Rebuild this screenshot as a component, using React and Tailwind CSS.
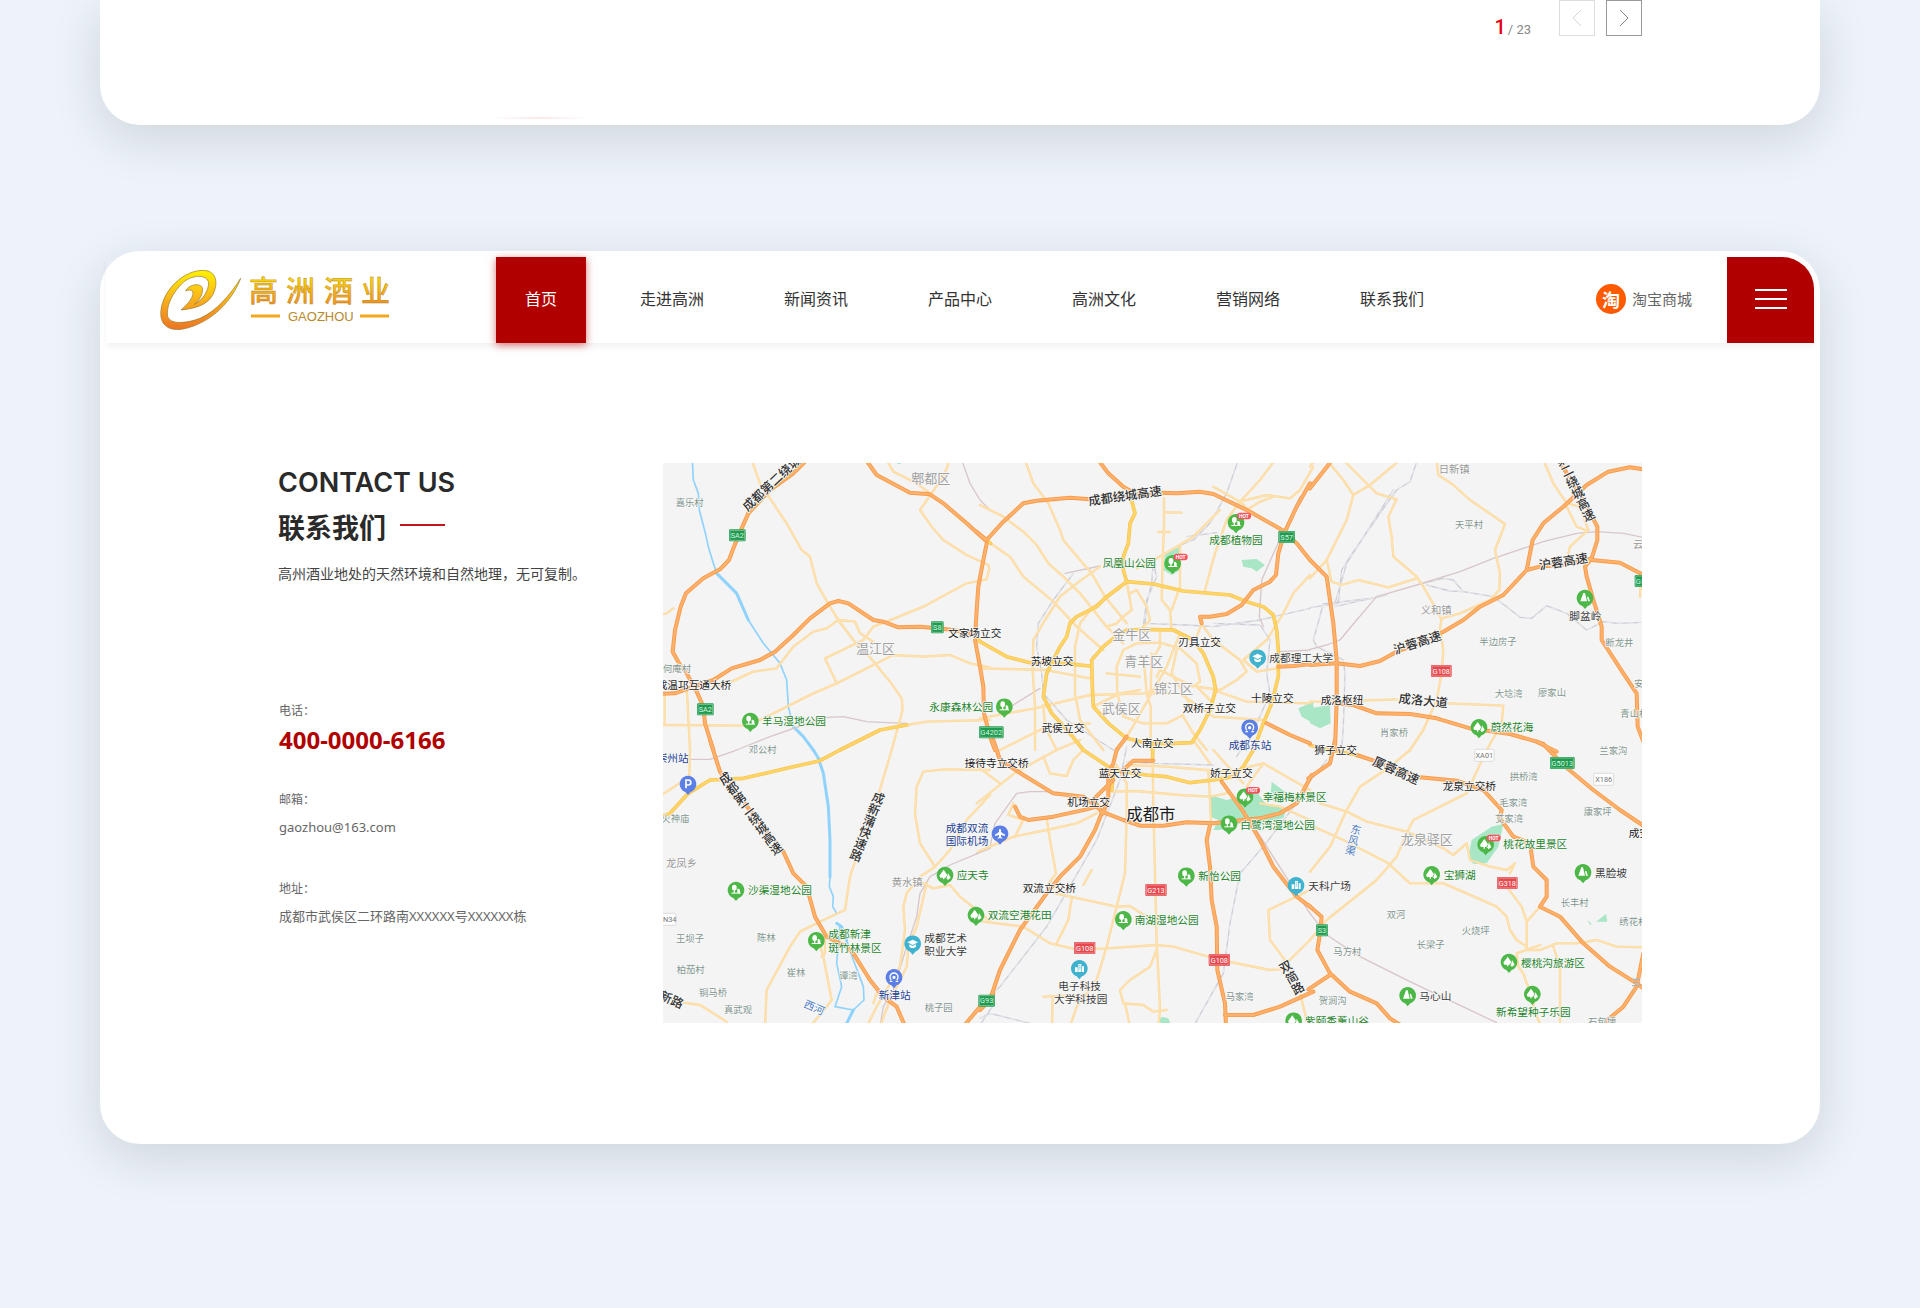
import React from "react";

const SANS = "font-['Noto_Sans','Noto_Sans_CJK_SC',sans-serif]";
const CJK = "font-['Noto_Sans_CJK_SC',sans-serif]";

/* ---------- Map data: six sheets, each with its own origin ---------- */

const SHEETS = [
  {
    at: [0, 0],
    highway: [
      "265 160 245 205 222 260 207 300 180 328 130 355 78 400 62 440 45 510 38 575 60 615 80 640 110 695 130 740 135 790 160 870",
      "265 160 330 90 400 40 440 0",
      "0 702 45 700 100 680 160 660 215 625 300 600 345 575 400 525 450 475 510 430 535 423 565 430 640 480 670 485 715 502 780 500 860 508 940 520",
      "618 0 650 45 750 98 810 103 850 130 920 190 975 240",
      "980 250 968 310 955 380 950 450 945 540 960 620 970 680 972 760 990 830 1005 870",
    ],
    gold: ["540 870 660 810 740 795", "940 520 960 545"],
    minor: [
      "275 0 300 70 350 145 380 190 425 270 450 290 470 370 510 440 535 480",
      "535 480 500 505 460 515 400 560 350 625 280 635 215 665 160 680",
      "535 480 580 540 620 580 690 665 725 715 728 750 695 870",
      "545 495 535 480 585 485 600 520 640 545",
      "530 670 495 595 610 540 640 500 680 485 790 440 920 370 980 358 988 325 985 315 920 285 850 240 815 200 780 150 850 50 870 0",
      "0 795 250 797 310 775 460 700 530 670 640 615 700 585 790 590 870 585 930 610 990 622",
      "14 710 14 795",
      "80 680 90 870",
      "0 464 20 460 40 445",
      "680 0 700 35 770 70 810 100",
      "740 795 800 785 990 780",
    ],
    river: ["97 0 100 60 115 100 118 150 135 215 145 260 160 310 170 340", "170 340 230 400 265 480 310 550 360 610 380 660 385 740 400 800"],
    wide: ["400 800 430 830 460 870", "170 340 230 400 265 480"],
    railway: [],
    metro: ["230 870 330 830 430 795 500 772 550 770 620 785 680 788 740 790", "905 0 930 70 960 120 990 150"],
    park: ["712 0 722 0 722 12 712 12"],
  },
  {
    at: [960, 0],
    highway: [
      "355 0 385 40 430 80 455 95",
      "-10 215 20 240 70 185 130 130 170 122 270 113 330 118 430 105 540 98 590 100 660 95 700 102 810 155 910 212 950 250 990 300",
      "990 70 950 140 915 215 895 280 888 345 870 365 820 390 785 435 740 462 690 470 660 470 665 490",
      "895 620 940 618 990 612",
      "860 790 930 825 990 850",
      "440 830 410 870",
    ],
    gold: [
      "10 232 32 250",
      "452 110 465 160 450 190 445 250 430 290 430 330 440 365",
      "440 365 520 372 610 393 750 405 800 425 850 440 880 465 890 510 895 570 895 650 875 730 850 790 820 870",
      "440 365 380 410 350 440 290 470 270 490 260 530 240 560 200 640 190 710 215 760 270 820 310 870",
      "0 545 80 590 150 608 250 610 330 618",
      "440 510 500 508 580 510 640 540 670 580 700 650 707 690 690 750 660 810 635 848 580 850 500 850 440 835 385 790 340 740 337 680 335 600 370 560 400 535 440 510",
    ],
    minor: [
      "135 0 160 70 205 130 240 210 250 240 300 300 335 340 375 410 440 490",
      "0 135 70 170 130 215 170 255 205 310 250 350 300 400 380 500 430 550",
      "25 245 90 290 130 350 220 425 290 500 370 570",
      "360 320 290 370 240 410 195 480 160 540 158 630 165 740 165 870",
      "552 115 552 200 548 300 545 420 570 450 575 510",
      "553 157 605 158",
      "535 216 570 216",
      "600 260 600 380 575 450",
      "440 365 450 420 455 450 430 470 410 490 380 500",
      "450 400 470 390 500 440 510 480 490 500",
      "420 385 340 440 300 490 285 560 285 640 285 700 300 780 370 870",
      "700 80 780 125 810 155",
      "900 -20 840 60 780 125 740 180 705 280 675 390",
      "780 125 860 105 930 115 960 90 1000 20",
      "800 150 840 125 880 110",
      "470 325 540 290 640 230 720 150",
      "990 345 940 400 910 460 860 540 790 600 830 635 890 625",
      "670 500 700 540 780 600 800 635 770 660 720 690 650 680",
      "665 490 650 530",
      "410 620 430 570 470 550 540 548 600 565 650 610 660 665 640 680 600 660 540 630 530 650",
      "410 620 412 700 430 770 490 790 560 790 610 765",
      "490 590 495 640 500 700 512 740 512 870",
      "515 580 512 700",
      "540 510 540 560 515 600",
      "0 625 200 630 250 640 330 655",
      "0 775 165 745 330 705 500 700 560 670",
      "60 870 200 800 330 790",
      "600 520 560 620 520 690 470 780 440 830",
      "500 700 600 700 700 770 850 780",
      "700 690 800 725 990 730",
      "340 740 420 700 480 690",
      "610 770 640 820 680 870",
      "650 680 700 730",
      "190 735 195 800 230 870",
      "590 570 575 640 640 750",
      "380 640 480 650",
    ],
    river: [],
    wide: [],
    railway: [
      "775 0 740 100 690 190 640 240 590 260 520 300 515 370 500 430 495 490 620 495 700 500 840 480 990 445",
      "520 310 530 350 500 420 490 500",
      "280 340 220 420 175 490 170 560 185 640 190 700 260 780 400 870",
      "700 490 840 495 870 540 860 640 870 700 800 860",
      "620 230 710 218",
    ],
    metro: ["255 340 360 318", "60 760 100 735 180 685", "960 110 885 270 845 360 838 470 850 500", "900 575 990 570"],
    park: [
      "785 300 830 297 855 315 830 335 815 325 790 320",
      "555 280 600 260 600 330 575 345 550 330",
      "1000 725 955 745 965 770 1000 790",
    ],
  },
  {
    at: [1950, 0],
    highway: [
      "0 85 55 15 65 0",
      "0 300 50 350 60 420 70 490 80 600 80 720 75 870",
      "0 615 80 610 150 618 210 603 260 575 330 550 400 515 460 480 510 440 580 405 650 330 690 320 770 312 845 295",
      "650 330 668 240 700 190 760 140 830 75 895 35 960 22 1000 28",
      "745 0 790 70 830 140 862 200 862 240 845 295 825 320 830 350 850 420 875 500 875 540 940 640 980 700 983 800 1000 845",
      "845 300 930 308 1000 345",
      "80 730 130 735 200 760 300 762 380 775 480 805 600 822 680 845 740 875",
    ],
    gold: [],
    minor: [
      "50 0 100 60 130 105 110 180 50 300 0 355",
      "0 20 15 0",
      "130 105 180 75 270 0",
      "100 0 160 60 200 100 260 118 235 170 245 230 250 290 320 350 340 380 380 450 395 480",
      "50 300 65 365 95 375 145 360 235 382 320 355",
      "380 0 385 45 430 75 480 120 585 192 555 270 570 340 568 390 540 420 450 460 395 475 390 505 400 570 395 640 380 720 340 810 300 870",
      "700 0 730 70 770 130 810 140 835 210 780 260 775 280",
      "770 140 800 200 830 212",
      "0 725 60 725 260 718",
      "415 730 580 737 575 790 530 870",
      "992 380 990 410",
    ],
    river: [],
    wide: [],
    railway: [
      "322 0 300 65 260 90 210 160 120 290 95 330 85 430 20 440 0 443",
      "250 90 110 310 75 430",
      "75 440 140 425 230 405 180 415 40 432 10 540 20 560 100 600 105 640 100 800 95 870",
      "340 370 400 355 430 360 460 395",
      "350 375 420 393 460 395 550 410 590 440 630 472 665 475 710 437 770 460 830 510 880 485 920 490 1000 487",
    ],
    metro: ["0 568 50 555 90 540 140 480 200 410 320 375 450 335 550 295 700 245 800 220 860 215 940 220 1000 232"],
    park: ["0 745 60 735 62 790 30 805 0 790"],
  },
  {
    at: [0, 840],
    highway: [
      "150 0 180 95 230 160 300 250 370 335 400 400 440 440 465 530 500 590 560 620 580 640 630 720 670 770 710 800 740 870",
      "1000 760 960 800 910 860",
    ],
    gold: ["0 232 30 220 85 160 150 120 250 115 380 85 480 62 540 30"],
    minor: [
      "0 168 88 110 90 30",
      "695 30 655 165 600 320 570 410 555 510 490 540 420 575 390 620 320 750 315 860",
      "990 90 850 88 790 95 770 140 765 220 780 310 825 380",
      "990 165 920 240 870 330 825 380 780 410 740 460 730 500 735 570 720 680 650 800 620 860",
      "800 430 770 560 745 620 740 680 690 780 660 860",
      "470 580 490 650 515 780 500 800 450 860",
      "70 788 120 795 200 845",
      "790 430 820 445 870 435 900 470 950 510 990 545",
      "495 590 495 640 485 650",
      "640 790 650 760 720 760",
    ],
    river: [
      "510 410 508 440 520 470 518 500 530 520",
      "555 620 560 600 580 660 610 740 612 780 580 810",
      "580 810 525 800 545 740 530 670 540 560",
    ],
    wide: ["460 30 475 55", "475 55 490 100 505 200 510 300 510 410", "530 550 545 560 560 600", "580 810 555 860"],
    railway: ["1000 795 970 840 950 870"],
    metro: ["95 58 150 58 220 34 230 30", "990 325 870 375 810 410 780 460 770 530 740 620 700 750 670 800 660 860"],
    park: [],
  },
  {
    at: [960, 840],
    highway: [
      "40 0 60 60 130 105 220 160 310 170 350 200 365 215",
      "410 30 400 70 385 100 385 170 370 220",
      "400 120 340 178 365 215",
      "365 220 345 270 300 350 240 410 200 460 120 570 60 690 30 780 0 810",
      "365 215 430 240 480 257 550 257 620 247 700 250 840 235 900 220 950 190 995 105",
      "105 200 120 230 145 240 220 230 320 208 350 200",
      "690 255 680 300 690 380 695 480 710 560 712 690 735 790 738 860",
      "735 825 820 825 900 800 1000 755",
      "725 125 790 215 840 300 880 380 950 470 990 500",
      "425 95 460 62 520 62",
    ],
    gold: [
      "310 30 385 80 430 95 500 105 560 110 630 128 700 120 760 110 790 80 820 30",
      "518 10 518 60",
      "400 100 395 150",
    ],
    minor: [
      "-10 190 110 95 230 30 300 0",
      "0 85 60 130",
      "190 50 210 100 260 108 280 60 310 30",
      "395 155 470 153 600 165 690 170 740 160",
      "410 75 440 130 440 230 435 400 410 500 380 620 350 720 290 800 270 860",
      "518 60 520 200 525 400 530 610 535 700 540 810 535 860",
      "685 90 690 180 693 250",
      "-5 335 100 290 200 270 290 250 350 220",
      "200 235 210 300 228 400 200 440",
      "130 240 105 290",
      "130 240 85 225 100 190",
      "225 460 410 500 450 498 500 530",
      "275 475 265 540 230 610",
      "10 545 130 560 210 610 290 628 380 625 530 615 580 620 720 660 870 690 900 688 990 600",
      "530 630 510 680 450 720 420 750 430 790 490 795 520 815 560 810",
      "435 790 450 860",
      "190 770 320 765",
      "218 770 216 860",
      "310 435 335 390",
      "440 75 560 80 680 90 750 95 850 70 920 110 990 150",
      "850 70 800 140",
      "840 190 900 200 990 240",
      "990 450 865 510 870 600 930 680 960 760 985 860",
      "640 0 690 70",
      "700 30 790 130",
    ],
    river: [],
    wide: [],
    railway: [
      "440 20 420 120 350 300 200 560 60 740 0 790",
      "980 150 850 320 780 400 750 550 730 700 640 860",
      "0 835 30 820 150 850",
      "800 0 770 50",
      "440 65 520 70 700 75",
    ],
    metro: ["-10 340 30 320 45 250 110 160 150 155 200 155 230 165", "790 210 950 460 990 520"],
    park: [
      "690 165 740 180 830 155 860 195 920 205 910 235 850 245 830 275 810 240 720 270 700 270 715 240 690 230",
      "875 125 915 155 905 190 870 180",
      "545 830 565 835 575 860 525 860",
    ],
  },
  {
    at: [1950, 840],
    highway: [
      "-5 115 60 70 75 0",
      "140 45 200 65 330 112 440 122 520 150 575 210 570 235 610 290 660 310 670 380 710 420 710 470 690 500 750 530 820 610 900 680 980 730 1000 745",
      "680 5 700 12 760 75 850 150 930 210 1000 257",
      "-5 495 35 530 30 580 22 630 60 700 120 755 200 790 240 835 280 860",
      "-5 748 60 705",
      "1000 640 980 740 940 800 880 850",
    ],
    gold: ["0 15 30 25 140 45"],
    minor: [
      "300 30 240 80 150 140 110 210 60 320 0 395",
      "530 30 470 160 310 240 290 280 260 350 200 420 50 540 0 600",
      "30 190 110 215 170 245 290 275 400 325 430 345 470 310 480 360 540 380 590 390 615 370 600 400",
      "0 255 100 300 235 370 300 430 400 430 470 460 560 500 590 530 600 570 620 600 650 620",
      "590 440 635 500 650 545 650 630 690 630 740 610 800 610 860 600 920 620 1000 622",
      "650 545 690 500",
      "690 615 620 640 625 680 640 700 650 730 665 760 675 820 695 860",
      "730 620 750 680 750 860",
    ],
    river: [],
    wide: [],
    railway: ["0 125 50 60"],
    metro: ["0 520 50 585 150 650 300 725 560 848"],
    park: [
      "580 252 545 260 485 300 475 350 490 372 530 370 565 320",
      "832 540 846 552 840 554",
      "858 545 872 535 888 522 892 545",
    ],
  },
];

/* [x, y (middle), text] with x at the left edge of the text */
const LABELS = {
  village: [
    [47, 131, "嘉乐村"], [9, 627, "何庵村"], [2385, 195, "天平村"], [2458, 548, "半边房子"], [2836, 550, "断龙井"],
    [2504, 702, "大埝湾"], [2634, 700, "廖家山"], [2160, 821, "肖家桥"], [2881, 762, "青山村"], [2923, 674, "安"],
    [266, 872, "邓公村"], [4, 1078, "火神庙"], [48, 1438, "王坝子"], [291, 1434, "陈林"],
    [50, 1532, "柏茄村"], [380, 1540, "崔林"], [117, 1599, "铜马桥"], [192, 1650, "真武观"], [537, 1548, "谭湾"],
    [794, 1644, "桃子园"], [1697, 1612, "马家湾"], [2818, 875, "兰家沟"], [2549, 952, "拱桥湾"], [2518, 1030, "毛家湾"],
    [2505, 1078, "艾家湾"], [2771, 1056, "康家坪"], [2180, 1366, "双河"], [2405, 1414, "火烧坪"], [2270, 1457, "长梁子"],
    [2020, 1476, "马方村"], [2702, 1329, "长丰村"], [2878, 1388, "绣花村"], [1976, 1625, "贺涧沟"], [2784, 1688, "石包埂"],
  ],
  town: [
    [2336, 29, "日新镇"], [2282, 454, "义和镇"], [2919, 255, "云"], [18, 1211, "龙凤乡"], [695, 1269, "黄水镇"],
  ],
  district: [
    [754, 58, "郫都区"], [588, 567, "温江区"], [1357, 525, "金牛区"], [1393, 606, "青羊区"], [1482, 688, "锦江区"],
    [1325, 748, "武侯区"], [2222, 1141, "龙泉驿区"],
  ],
  junction: [
    [-10, 678, "成温邛互通大桥"], [864, 521, "文家场立交"], [1112, 604, "苏坡立交"], [1555, 549, "刃具立交"],
    [1773, 716, "十陵立交"], [1568, 745, "双桥子立交"], [1145, 807, "武侯立交"], [1413, 851, "人南立交"],
    [1982, 721, "成洛枢纽"], [914, 911, "接待寺立交桥"], [1316, 941, "蓝天立交"], [1650, 941, "娇子立交"],
    [1222, 1028, "机场立交"], [1088, 1285, "双流立交桥"], [1963, 871, "狮子立交"], [2348, 981, "龙泉立交桥"],
    [2906, 1121, "成安"],
  ],
  place: [
    [1828, 596, "成都理工大学"], [2728, 469, "脚盆岭"], [793, 1436, "成都艺术"], [793, 1476, "职业大学"],
    [1195, 1579, "电子科技"], [1182, 1620, "大学科技园"], [1945, 1280, "天科广场"], [2805, 1240, "黑脸坡"], [2278, 1610, "马心山"],
  ],
  green: [
    [306, 785, "羊马湿地公园"], [808, 742, "永康森林公园"], [1328, 312, "凤凰山公园"], [1648, 242, "成都植物园"],
    [2492, 804, "蔚然花海"], [264, 1293, "沙渠湿地公园"], [505, 1424, "成都新津"], [505, 1465, "斑竹林景区"],
    [890, 1248, "应天寺"], [983, 1368, "双流空港花田"], [1424, 1382, "南湖湿地公园"], [1615, 1250, "新怡公园"],
    [1808, 1012, "幸福梅林景区"], [1741, 1096, "白鹭湾湿地公园"], [2530, 1154, "桃花故里景区"], [2351, 1246, "宝狮湖"],
    [2583, 1510, "樱桃沟旅游区"], [2508, 1657, "新希望种子乐园"], [1935, 1686, "紫颐香薰山谷"],
  ],
  transit: [
    [1706, 857, "成都东站"], [-10, 895, "崇州站"], [857, 1106, "成都双流"], [857, 1145, "国际机场"], [656, 1607, "新津站"],
  ],
};

const LABEL_STYLE = {
  village: { size: 28, cls: "fill-[#82968f]" },
  town: { size: 31, cls: "fill-[#999999]" },
  district: { size: 39, cls: "fill-[#a0a0a0]" },
  junction: { size: 32, cls: "fill-[#1c1c1c]" },
  place: { size: 32, cls: "fill-[#3c3c3c]" },
  green: { size: 32, cls: "fill-[#23842a]" },
  transit: { size: 32, cls: "fill-[#243f94]" },
};

/* Road names: centre, angle, text and whether the characters are stacked */
const ROAD_NAMES = [
  [362, 45, -43, "成都第二绕城高速"],
  [1395, 108, -8, "成都绕城高速"],
  [2272, 548, -18, "沪蓉高速"],
  [2710, 305, -9, "沪蓉高速"],
  [2290, 722, 6, "成洛大道"],
  [2208, 932, 24, "厦蓉高速"],
  [18, 1612, 24, "成新路"],
  [272, 1060, -36, "成都第二绕城高速", true],
  [622, 1100, 21, "成新蒲快速路", true],
  [1895, 1552, -30, "双简路", true],
  [2745, 82, -26, "第二绕城高速", true],
];

const PINS = [
  ["park", 271, 783], ["park", 1033, 740], ["park", 1538, 310, true], ["park", 1728, 187, true], ["hill", 2775, 414],
  ["trees", 2457, 802], ["school", 1793, 593], ["rail", 1769, 803], ["car", 84, 972], ["park", 228, 1290],
  ["park", 469, 1441], ["trees", 855, 1245], ["trees", 948, 1365], ["school", 758, 1451], ["rail", 702, 1552],
  ["plane", 1020, 1121], ["park", 1579, 1247], ["park", 1390, 1378], ["office", 1258, 1525], ["office", 1908, 1276],
  ["trees", 1755, 1010, true], ["park", 1707, 1091], ["trees", 2477, 1153, true], ["trees", 2315, 1243],
  ["hill", 2769, 1237], ["hill", 2243, 1606], ["trees", 2547, 1506], ["trees", 2617, 1602], ["trees", 1901, 1682],
];

const PIN_FILL = {
  park: "#4db848", hill: "#4db848", trees: "#4db848", school: "#3fb2cf", office: "#3fb2cf",
  rail: "#5b7fe6", car: "#5b7fe6", plane: "#5b7fe6",
};

const BADGES = [
  ["green", 232, 226, 50, "SA2"], ["green", 136, 748, 50, "SA2"], ["green", 832, 502, 38, "S8"],
  ["green", 994, 817, 74, "G4202"], ["green", 1880, 231, 50, "S57"], ["green", 2941, 363, 34, "G5"],
  ["red", 2344, 633, 62, "G108"], ["red", 1488, 1290, 64, "G213"], ["red", 1274, 1464, 64, "G108"], ["red", 1678, 1500, 64, "G108"],
  ["red", 2542, 1269, 62, "G318"], ["green", 980, 1622, 50, "G93"], ["green", 2707, 909, 74, "G5013"], ["green", 1986, 1411, 36, "S3"],
  ["plain", 2473, 886, 58, "XA01"], ["plain", 2831, 958, 60, "X186"], ["plain", 22, 1378, 52, "XN34"],
];

function PinGlyph({ kind }) {
  switch (kind) {
    case "park":
      return (
        <g fill="#fff">
          <path d="M-5-16a7 8 0 0 1 7 8v3c0 4-2 6-5 6v8h-4V1c-3 0-5-2-5-6v-3a7 8 0 0 1 7-8z" />
          <path d="M4-4h4l4 4v9H4z" />
          <path d="M-14 8h28v3h-28z" />
        </g>
      );
    case "trees":
      return (
        <g fill="#fff">
          <path d="M-4-16l11 16-5 8h-4v5h-4V8h-8l-3-6z" />
          <path d="M9-6l8 14-3 3h-3v3H7v-3H4l4-10z" />
        </g>
      );
    case "hill":
      return (
        <g fill="#fff">
          <path d="M-5-15h5l6 25h-20z" />
          <path d="M6-4h4l5 14H9z" />
        </g>
      );
    case "school":
      return (
        <g fill="#fff">
          <path d="M0-12l16 8-16 8-16-8z" />
          <path d="M-10 2l10 5 10-5v7c-5 5-15 5-20 0z" />
        </g>
      );
    case "office":
      return (
        <g fill="#fff">
          <path d="M-3-13h9v24h-9z" />
          <path d="M-13-3h8v14h-8zM8-6h6v17H8z" />
          <path d="M-1-8h5M-1-3h5M-1 2h5" stroke="#3fb2cf" strokeWidth="2" />
        </g>
      );
    case "rail":
      return (
        <g fill="none" stroke="#fff" strokeWidth="4">
          <path d="M-8 8a12 12 0 1 1 16 0" />
          <path d="M-13 12h8M5 12h8" />
          <circle cx="0" cy="0" r="3" fill="#fff" />
        </g>
      );
    case "plane":
      return <path fill="#fff" d="M0-15c2 0 3 3 3 6v4l12 8v4L3 4v6l4 3v2l-7-2-7 2v-2l4-3V4l-12 3V3l12-8v-4c0-3 1-6 3-6z" />;
    default:
      return <path fill="none" stroke="#fff" strokeWidth="5" d="M-6 13v-25h7a7 7 0 0 1 0 15h-7" />;
  }
}

function Pin({ kind, x, y, hot }) {
  return (
    <g transform={`translate(${x} ${y})`}>
      <path d="M0 33l-8-9a25 25 0 1 1 16 0z" fill={PIN_FILL[kind]} />
      <PinGlyph kind={kind} />
      {hot && (
        <g>
          <rect x="3" y="-29" width="42" height="20" rx="9" fill="#f4545f" />
          <text x="24" y="-13" textAnchor="middle" fontSize="15" className="fill-white font-['Roboto',sans-serif] font-bold">
            HOT
          </text>
        </g>
      )}
    </g>
  );
}

const BADGE_STYLE = {
  green: { bg: "#1f9a4e", line: "#9fd9b4", text: "fill-[#d9f5e2]" },
  red: { bg: "#e5484d", line: "#f7b3b5", text: "fill-white" },
  plain: { bg: "#fdfdfd", line: "#cfcfcf", text: "fill-[#777777]" },
};

function Badge({ kind, x, y, w, text }) {
  const s = BADGE_STYLE[kind];
  return (
    <g>
      <rect x={x - w / 2} y={y - 18} width={w} height="36" rx="4" fill={s.bg} />
      <rect x={x - w / 2 + 3} y={y - 15} width={w - 6} height="30" rx="2" fill="none" stroke={s.line} strokeWidth={kind === "plain" ? 0 : 2} />
      {kind === "plain" && (
        <rect x={x - w / 2} y={y - 18} width={w} height="36" rx="4" fill="none" stroke={s.line} strokeWidth="2" />
      )}
      <text x={x} y={y + 8} textAnchor="middle" fontSize="22" className={`${s.text} font-['Roboto',sans-serif]`}>
        {text}
      </text>
    </g>
  );
}

function Layer({ kind, ...stroke }) {
  return (
    <g fill="none" strokeLinejoin="round" strokeLinecap="round" {...stroke}>
      {SHEETS.map((sheet) =>
        sheet[kind].map((points) => (
          <polyline key={sheet.at + points} points={points} transform={`translate(${sheet.at[0]} ${sheet.at[1]})`} />
        ))
      )}
    </g>
  );
}

function CityMap() {
  return (
    <svg viewBox="9 9 2937 1680" role="img" aria-label="成都市地图" className={`block h-auto w-full bg-[#f4f4f4] ${CJK}`}>
      <g fill="#a9e6c5">
        {SHEETS.map((sheet) =>
          sheet.park.map((points) => (
            <polygon key={points} points={points} transform={`translate(${sheet.at[0]} ${sheet.at[1]})`} />
          ))
        )}
      </g>
      <Layer kind="river" stroke="#8fd3fd" strokeWidth="5" />
      <Layer kind="wide" stroke="#8fd3fd" strokeWidth="9" />
      <Layer kind="railway" stroke="#cccdd6" strokeWidth="4" />
      <Layer kind="railway" stroke="#f4f4f8" strokeWidth="2" strokeDasharray="14 18" />
      <Layer kind="metro" stroke="#d9c6c9" strokeWidth="4" />
      <Layer kind="minor" stroke="#fbd79a" strokeWidth="7" />
      <Layer kind="minor" stroke="#ffe2ae" strokeWidth="4" />
      <Layer kind="gold" stroke="#f8c254" strokeWidth="11" />
      <Layer kind="gold" stroke="#ffd564" strokeWidth="7" />
      <Layer kind="highway" stroke="#f79a48" strokeWidth="12" />
      <Layer kind="highway" stroke="#ffb06a" strokeWidth="7" />

      {/* Toll plaza */}
      <path d="M2918 1558h22M2920 1567h18M2916 1577h26" stroke="#a9b6c4" strokeWidth="4" />

      {Object.entries(LABELS).map(([kind, items]) => {
        const s = LABEL_STYLE[kind];
        return (
          <g key={kind} fontSize={s.size} className={s.cls} stroke="#f9f9f9" strokeWidth="4" strokeLinejoin="round" paintOrder="stroke">
            {items.map(([x, y, text]) => (
              <text key={`${x}-${y}`} x={x} y={y + Math.round(s.size * 0.37) - 2}>
                {text}
              </text>
            ))}
          </g>
        );
      })}

      <g fontSize="37" className="fill-[#333333] font-medium" stroke="#f9f9f9" strokeWidth="5" paintOrder="stroke" textAnchor="middle">
        {ROAD_NAMES.map(([x, y, angle, text, stacked]) => (
          <text
            key={`${x}-${y}`}
            x={x}
            y={stacked ? y : y + 13}
            transform={`rotate(${angle} ${x} ${y})`}
            className={stacked ? "[writing-mode:vertical-rl]" : ""}
          >
            {text}
          </text>
        ))}
      </g>

      <g fontSize="32" className="fill-[#4f7fc4]" stroke="#f9f9f9" strokeWidth="5" paintOrder="stroke" textAnchor="middle">
        <text x="463" y="1654" transform="rotate(24 463 1642)">
          西河
        </text>
        <text x="2080" y="1140" transform="rotate(14 2080 1140)" className="[writing-mode:vertical-rl]">
          东风渠
        </text>
      </g>

      <text x="1399" y="1081" fontSize="49" className="fill-[#1c1c1c]" stroke="#f9f9f9" strokeWidth="5" paintOrder="stroke">
        成都市
      </text>

      {BADGES.map(([kind, x, y, w, text]) => (
        <Badge key={`${x}-${y}`} kind={kind} x={x} y={y} w={w} text={text} />
      ))}
      {PINS.map(([kind, x, y, hot]) => (
        <Pin key={`${x}-${y}`} kind={kind} x={x} y={y} hot={hot} />
      ))}
    </svg>
  );
}

/* ---------- Page chrome ---------- */

function Logo() {
  return (
    <svg viewBox="0 0 234 60" width="234" height="60" role="img" aria-label="高洲酒业" className="block shrink-0">
      <defs>
        <linearGradient id="swirl" x1="0" y1="0" x2="0" y2="1">
          <stop offset="0" stopColor="#fff200" />
          <stop offset="0.5" stopColor="#f9b01c" />
          <stop offset="1" stopColor="#ec7424" />
        </linearGradient>
        <linearGradient id="letters" x1="0" y1="0" x2="0" y2="1">
          <stop offset="0.2" stopColor="#f8d800" />
          <stop offset="0.6" stopColor="#f4ab1a" />
          <stop offset="1" stopColor="#ee8420" />
        </linearGradient>
      </defs>
      <g transform="scale(0.3333) translate(-30 -45)" fill="url(#swirl)" stroke="#96762c" strokeWidth="2">
        <path d="M272 70C250 130 190 205 95 223C50 228 28 205 33 165C40 105 100 46 160 46C200 47 207 85 187 122C168 152 135 160 93 165C105 153 118 143 125 128C135 108 125 100 107 108C112 92 148 80 157 98C160 115 150 135 133 148C155 138 175 110 176 85C172 55 125 60 100 82C65 115 48 155 53 185C62 210 110 205 150 190C200 168 240 120 272 70Z" />
      </g>
      <text x="89 126 164 201" y="32" fontSize="29" fill="url(#letters)" stroke="#b0832a" strokeWidth="0.4" className={`${CJK} font-medium`}>
        高洲酒业
      </text>
      <path d="M91 46h29M200 46h29" stroke="#f6a81c" strokeWidth="3" />
      <text x="128" y="51" fontSize="13" className="fill-[#b8892c] font-['Liberation_Sans',sans-serif]">
        GAOZHOU
      </text>
    </svg>
  );
}

const NAV = ["走进高洲", "新闻资讯", "产品中心", "高洲文化", "营销网络", "联系我们"];

function Header() {
  return (
    <header className="flex h-[86px] items-stretch rounded-tr-[32px] pl-[54px] shadow-[0_4px_6px_rgba(0,0,0,0.05)]">
      <a href="#home" className="flex items-center">
        <Logo />
      </a>
      <nav className={`ml-[102px] flex items-stretch text-base text-[#333333] ${CJK}`}>
        <a
          href="#home"
          aria-current="page"
          className="mr-3.5 flex w-[90px] items-center justify-center bg-[#b10000] pb-1 text-white shadow-[0_2px_8px_rgba(190,0,0,0.55)]"
        >
          首页
        </a>
        {NAV.map((item) => (
          <a key={item} href={`#${item}`} className="flex items-center whitespace-nowrap px-10 pb-1">
            {item}
          </a>
        ))}
      </nav>
      <a href="#taobao" className={`ml-auto flex items-center gap-1.5 whitespace-nowrap pr-[35px] pb-0.5 text-[15px] text-[#666666] ${CJK}`}>
        <span aria-hidden="true" className="flex size-[30px] items-center justify-center rounded-full bg-[#ff5a00] text-lg font-bold leading-none text-white">
          淘
        </span>
        淘宝商城
      </a>
      <button type="button" aria-label="菜单" className="flex w-[87px] flex-col items-center justify-center gap-[7px] rounded-tr-[32px] bg-[#b10000] pb-0.5">
        <span className="h-0.5 w-8 bg-white" />
        <span className="h-0.5 w-8 bg-white" />
        <span className="h-0.5 w-8 bg-white" />
      </button>
    </header>
  );
}

function Pager() {
  return (
    <div className="flex h-9 items-center justify-end pr-[178px]">
      <p className="mr-7 flex items-baseline gap-0.5 pt-5 font-['Roboto',sans-serif] text-[13px] leading-5 text-[#888888]">
        <span className="text-xl font-medium leading-5 text-[#e60012]">1</span>
        <span>/ 23</span>
      </p>
      <button type="button" aria-label="上一页" className="mr-[11px] flex size-9 items-center justify-center border border-[#dddddd] text-[#d5d5d5]">
        <svg viewBox="0 0 10 18" width="10" height="18" fill="none" stroke="currentColor">
          <path d="M9 1L1 9l8 8" />
        </svg>
      </button>
      <button type="button" aria-label="下一页" className="flex size-9 items-center justify-center border border-[#999999] text-[#888888]">
        <svg viewBox="0 0 10 18" width="10" height="18" fill="none" stroke="currentColor">
          <path d="M1 1l8 8-8 8" />
        </svg>
      </button>
    </div>
  );
}

function ContactItem({ label, children }) {
  return (
    <div className="h-[89px]">
      <dt className="text-xs leading-[18px]">{label}：</dt>
      <dd className="mt-1.5">{children}</dd>
    </div>
  );
}

function Contact() {
  return (
    <section className="flex px-[172px] pt-[120px] pb-[115px]">
      <div className="w-[385px] shrink-0">
        <h2 className="text-[27px] font-semibold text-[#2a2a2a]">
          <span className="block pt-0.5 font-['Inter',sans-serif] leading-9">CONTACT US</span>
          <span className={`mt-1.5 flex items-center gap-3.5 leading-10 font-bold ${CJK}`}>
            联系我们
            <span aria-hidden="true" className="mb-1 h-0.5 w-[45px] bg-[#c4161c]" />
          </span>
        </h2>
        <p className={`mt-3.5 text-sm leading-6 text-[#444444] ${CJK}`}>高州酒业地处的天然环境和自然地理，无可复制。</p>
        <dl className={`mt-[117px] pl-px text-[#666666] ${SANS}`}>
          <ContactItem label="电话">
            <a href="tel:400-0000-6166" className="block text-2xl leading-7 font-bold text-[#b10000]">
              400-0000-6166
            </a>
          </ContactItem>
          <ContactItem label="邮箱">
            <a href="mailto:gaozhou@163.com" className="block text-[13px] leading-6">
              gaozhou@163.com
            </a>
          </ContactItem>
          <ContactItem label="地址">
            <span className="block text-[13px] leading-6">成都市武侯区二环路南XXXXXX号XXXXXX栋</span>
          </ContactItem>
        </dl>
      </div>
      <div className="min-w-0 flex-1">
        <CityMap />
      </div>
    </section>
  );
}

const CARD_SHADOW = "shadow-[0_14px_48px_rgba(35,60,35,0.15)]";

export default function App() {
  return (
    <div className="min-h-screen overflow-x-hidden bg-[#edf2fb] px-[100px] pb-40">
      <section className={`flex h-[125px] flex-col rounded-b-[40px] bg-white ${CARD_SHADOW}`}>
        <Pager />
        <div aria-hidden="true" className="mt-auto mb-1.5 ml-[390px] h-0.5 w-[100px] bg-linear-to-r from-transparent via-[#fbe9e9] to-transparent" />
      </section>
      <main className={`mt-[126px] rounded-[40px] bg-white p-1.5 ${CARD_SHADOW}`}>
        <Header />
        <Contact />
      </main>
    </div>
  );
}
